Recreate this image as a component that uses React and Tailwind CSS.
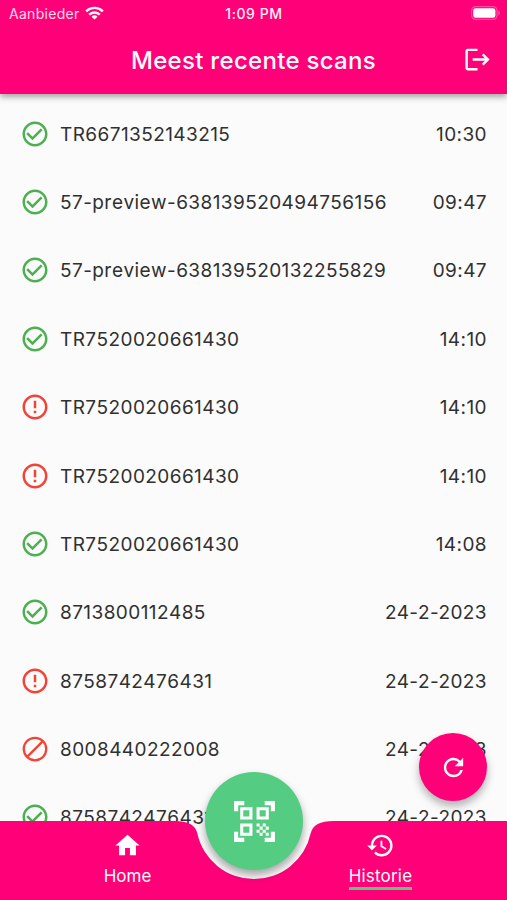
import {
  MdCheckCircleOutline,
  MdErrorOutline,
  MdHistory,
  MdHome,
  MdLogout,
  MdQrCodeScanner,
  MdRefresh,
} from "react-icons/md";

const scans = [
  { code: "TR6671352143215", time: "10:30", status: "ok" },
  { code: "57-preview-638139520494756156", time: "09:47", status: "ok" },
  { code: "57-preview-638139520132255829", time: "09:47", status: "ok" },
  { code: "TR7520020661430", time: "14:10", status: "ok" },
  { code: "TR7520020661430", time: "14:10", status: "error" },
  { code: "TR7520020661430", time: "14:10", status: "error" },
  { code: "TR7520020661430", time: "14:08", status: "ok" },
  { code: "8713800112485", time: "24-2-2023", status: "ok" },
  { code: "8758742476431", time: "24-2-2023", status: "error" },
  { code: "8008440222008", time: "24-2-2023", status: "blocked" },
  { code: "8758742476431", time: "24-2-2023", status: "ok" },
];

export default function App() {
  return (
    <div className="relative flex h-[900px] w-[507px] flex-col overflow-hidden bg-[#fbfbfb] font-['Inter',sans-serif]">
      <header className="z-10 h-[94px] shrink-0 bg-[#ff0079] text-white shadow-[0_3px_6px_rgba(0,0,0,0.35)]">
        <StatusBar />
        <div className="grid h-[65px] grid-cols-[60px_1fr_60px] items-center">
          <span />
          <h1 className="pt-[2px] text-center text-[24px] leading-none font-[450] tracking-[0.3px] whitespace-nowrap">
            Meest recente scans
          </h1>
          <button type="button" className="flex justify-center">
            <MdLogout size={29} />
          </button>
        </div>
      </header>

      <main className="min-h-0 flex-1 overflow-hidden pt-[5.4px]">
        {scans.map((scan, index) => (
          <ScanRow key={index} scan={scan} />
        ))}
      </main>

      <button
        type="button"
        className="absolute top-[733px] left-[419px] flex size-[68px] items-center justify-center rounded-full bg-[#ff0079] text-white shadow-[0_5px_9px_rgba(0,0,0,0.3)]"
      >
        <MdRefresh size={29} />
      </button>

      <BottomBar />
    </div>
  );
}

function StatusBar() {
  return (
    <div className="grid h-[27px] grid-cols-3 items-center pr-[6px] pl-[9px]">
      <div className="flex items-center gap-[5px]">
        <span className="pt-px text-[14px] leading-none tracking-[0.3px] opacity-85">Aanbieder</span>
        <svg className="-mt-px" width="19" height="14" viewBox="0 0 20 14" fill="none" stroke="currentColor" strokeWidth="2.6">
          <path d="M1.2 5.2a12.6 12.6 0 0 1 17.6 0" />
          <path d="M4.4 8.7a8 8 0 0 1 11.2 0" />
          <path d="M10 13.8 6.9 10.9a4.4 4.4 0 0 1 6.2 0Z" fill="currentColor" stroke="none" />
        </svg>
      </div>
      <span className="pt-px pr-[2px] text-center text-[14px] leading-none font-[550] tracking-[0.55px] opacity-95">
        1:09 PM
      </span>
      <svg className="-mt-px justify-self-end" width="30" height="14" viewBox="0 0 30 14">
        <rect x="0.6" y="0.6" width="25.4" height="12.8" rx="4" fill="none" stroke="#fff" strokeOpacity="0.3" strokeWidth="1.2" />
        <rect x="2.2" y="2.2" width="22.2" height="9.6" rx="2.4" fill="#fff" />
        <path d="M27.4 4.6c1.9.7 1.9 4.1 0 4.8Z" fill="#fff" fillOpacity="0.4" />
      </svg>
    </div>
  );
}

function ScanRow({ scan }) {
  return (
    <div className="flex h-[68.4px] items-center px-[20px] text-[19px] leading-none tracking-[0.42px] text-[#303030]">
      <StatusIcon status={scan.status} />
      <span className="ml-[10px] pt-px [font-kerning:none]">{scan.code}</span>
      <span className="ml-auto pt-px">{scan.time}</span>
    </div>
  );
}

function StatusIcon({ status }) {
  if (status === "error") {
    return <MdErrorOutline size={30} className="text-[#f44336]" />;
  }

  if (status === "blocked") {
    return (
      <svg width="30" height="30" viewBox="0 0 24 24" fill="none" stroke="#f44336" strokeWidth="1.8">
        <circle cx="12" cy="12" r="9" />
        <path d="M5.9 18.1 18.1 5.9" />
      </svg>
    );
  }

  return <MdCheckCircleOutline size={30} className="text-[#4caf50]" />;
}

function BottomBar() {
  return (
    <nav className="absolute inset-x-0 bottom-0 h-[79px] text-white">
      {/* bar with a round notch for the scan button */}
      <svg className="absolute inset-0" width="507" height="79" viewBox="0 0 507 79">
        <path
          d="M0 0H174.4Q194.6 0 197.3 12.3A58 58 0 0 0 310.7 12.3Q313.4 0 333.6 0H507V79H0Z"
          fill="#ff0079"
        />
      </svg>

      <div className="relative grid h-full grid-cols-2 pl-px text-[17px] leading-none">
        <div className="flex flex-col items-center pt-[10px]">
          <MdHome size={29} />
          <span className="mt-[8px]">Home</span>
        </div>
        <div className="flex flex-col items-center pt-[10px]">
          <MdHistory size={29} />
          <span className="mt-[8px] border-b-[3px] border-[#54cc82] pb-[2px] tracking-[0.2px]">
            Historie
          </span>
        </div>
      </div>

      <button
        type="button"
        className="absolute top-[-49px] left-[205px] flex size-[98px] items-center justify-center rounded-full bg-[#54cc82] shadow-[0_5px_9px_rgba(0,0,0,0.35)]"
      >
        <MdQrCodeScanner size={49} />
      </button>
    </nav>
  );
}
